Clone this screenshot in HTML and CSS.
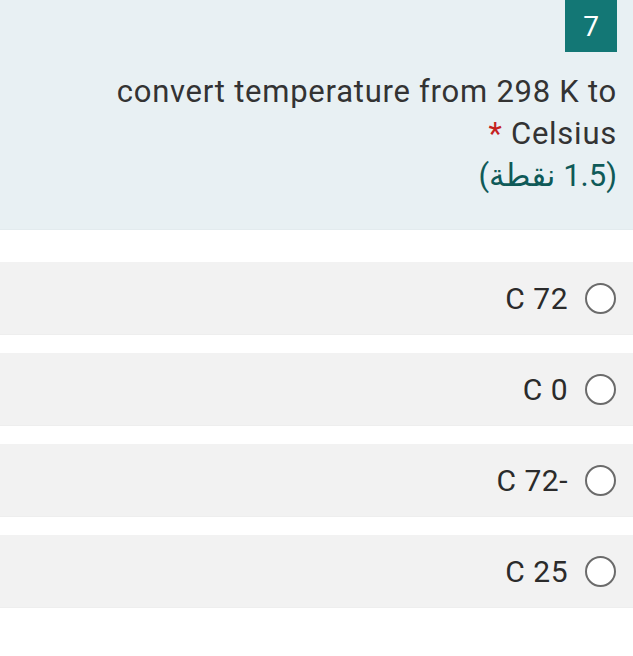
FILE: index.html
```html
<!DOCTYPE html>
<html lang="ar" dir="rtl">
<head>
<meta charset="utf-8">
<link rel="stylesheet" href="styles.css">
</head>
<body>
<section class="question">
  <div class="badge-row"><span class="badge">7</span></div>
  <div class="title">convert temperature from 298 K to Celsius <span class="req">*</span></div>
  <div class="points">(1.5 نقطة)</div>
</section>
<ul class="options">
  <li class="option"><span class="radio"></span><span class="label">72 C</span></li>
  <li class="option"><span class="radio"></span><span class="label">0 C</span></li>
  <li class="option"><span class="radio"></span><span class="label">-72 C</span></li>
  <li class="option"><span class="radio"></span><span class="label">25 C</span></li>
</ul>
</body>
</html>
```
FILE: styles.css
```css
html, body {
  margin: 0;
  padding: 0;
  background: #ffffff;
}
body {
  font-family: Roboto, "DejaVu Sans", sans-serif;
  color: #333333;
}
.question {
  background: #e8f0f3;
  border-bottom: 1px solid #e3ebee;
  padding: 0 16px 32px 100px;
}
.badge-row {
  display: flex;
  justify-content: flex-start;
}
.badge {
  width: 52px;
  height: 52px;
  background: #137775;
  color: #ffffff;
  font-size: 28px;
  display: flex;
  align-items: center;
  justify-content: center;
}
.title {
  margin-top: 19px;
  font-size: 31px;
  line-height: 42px;
  letter-spacing: 0.75px;
  color: #333333;
}
.req {
  color: #c5221f;
}
.points {
  font-size: 31px;
  line-height: 42px;
  color: #0f5a58;
}
.options {
  list-style: none;
  margin: 32px 0 0 0;
  padding: 0;
  display: flex;
  flex-direction: column;
  gap: 18px;
}
.option {
  height: 72px;
  background: #f2f2f2;
  border-bottom: 1px solid #eeeeee;
  display: flex;
  align-items: center;
  padding-right: 17px;
  gap: 17px;
}
.radio {
  width: 27px;
  height: 27px;
  border: 2px solid #6b6b6b;
  border-radius: 50%;
  background: #ffffff;
  flex: none;
}
.label {
  font-size: 30px;
  letter-spacing: 0.5px;
  color: #2b2b2b;
}
```
